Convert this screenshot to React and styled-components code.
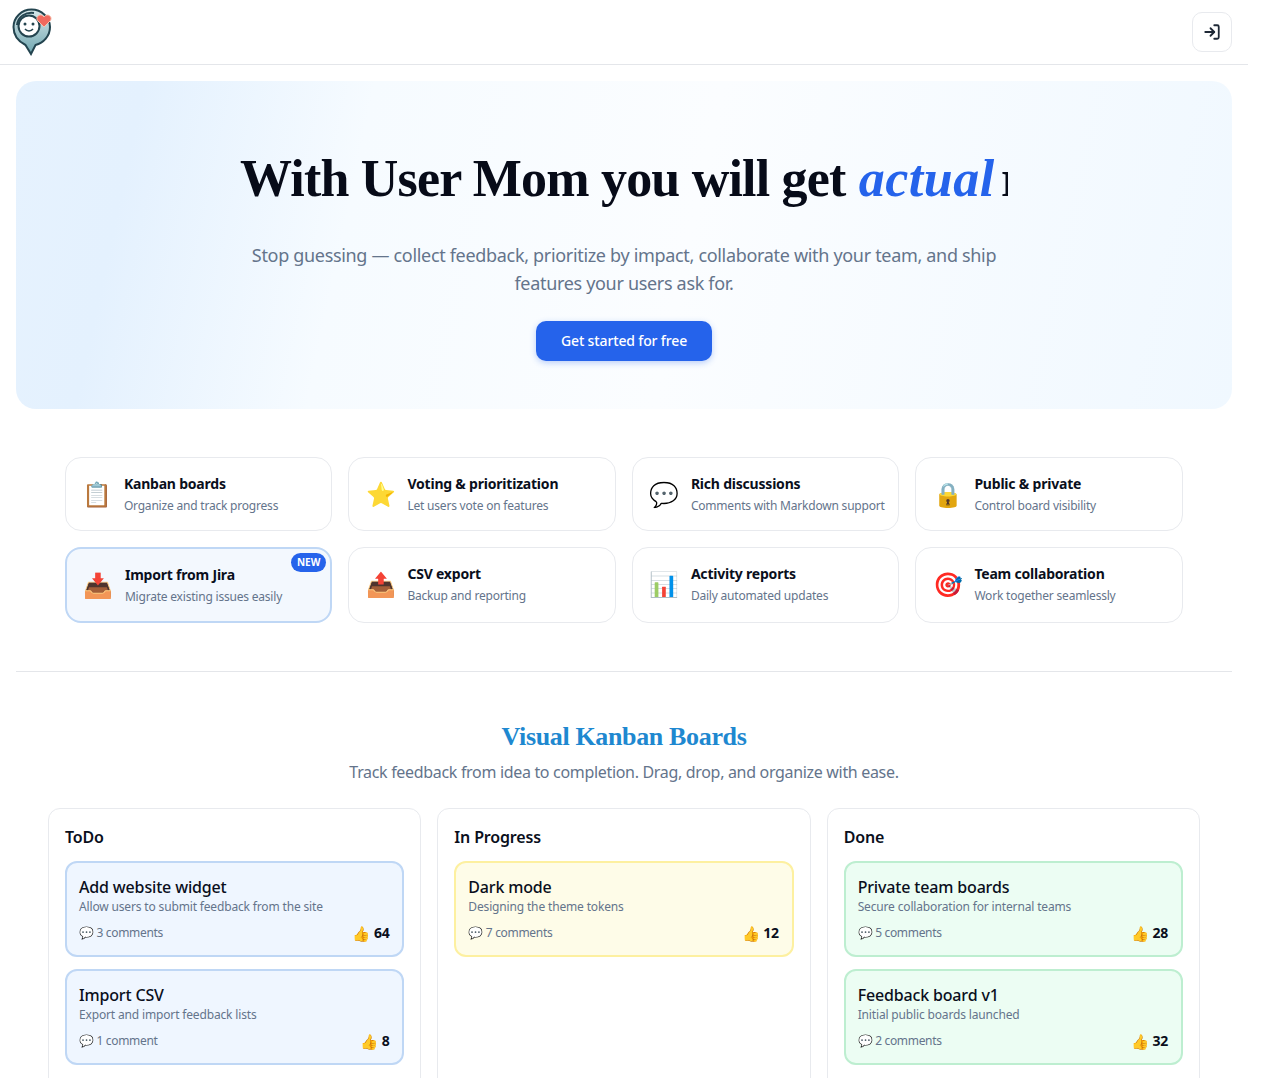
import React from "react";
import styled, { createGlobalStyle } from "styled-components";
import { LogIn } from "lucide-react";

const Global = createGlobalStyle`
    html, body {
        margin: 0;
        height: 1078px;
        overflow: hidden;
        background: #ffffff;
    }
    body {
        font-family: "Noto Sans", "Open Sans", sans-serif;
        letter-spacing: -0.02em;
        color: #0a0f1c;
    }
    * {
        box-sizing: border-box;
    }
`;

const Page = styled.div`
    width: 1248px;
`;

const Header = styled.header`
    height: 65px;
    border-bottom: 1px solid #e4e6ea;
    display: flex;
    align-items: center;
    justify-content: space-between;
    padding: 0 16px 0 12px;
`;

const IconButton = styled.button`
    width: 40px;
    height: 40px;
    border: 1px solid #e8eaee;
    border-radius: 10px;
    background: #ffffff;
    color: #1f2937;
    display: flex;
    align-items: center;
    justify-content: center;
    padding: 0;
`;

const Hero = styled.section`
    margin: 16px 16px 0;
    height: 328px;
    border-radius: 20px;
    background: linear-gradient(102deg, #e6f2fe 0%, #e4f1fe 10%, #f6fbff 28%, #fbfdff 55%, #f0f8ff 100%);
    display: flex;
    flex-direction: column;
    align-items: center;
    padding-top: 67px;
`;

const HeroTitle = styled.h1`
    margin: 0;
    width: 768px;
    height: 62px;
    overflow: hidden;
    white-space: nowrap;
    font-family: "Liberation Serif", "DejaVu Serif", serif;
    font-size: 52px;
    line-height: 62px;
    font-weight: 700;
    letter-spacing: -0.8px;
    color: #070b18;
`;

const Accent = styled.em`
    color: #2563eb;
    letter-spacing: 0.5px;
    margin-left: 1px;
`;

const Typed = styled.span`
    margin-left: -6px;
`;

const HeroText = styled.p`
    margin: 31px 0 0;
    width: 768px;
    text-align: center;
    font-size: 18px;
    line-height: 28px;
    color: #64748b;
`;

const Cta = styled.button`
    margin-top: 24px;
    width: 176px;
    height: 40px;
    border: none;
    border-radius: 10px;
    background: #2563eb;
    color: #ffffff;
    padding: 0 0 2px;
    font: 500 14px "Noto Sans", sans-serif;
    letter-spacing: -0.01em;
    box-shadow: 0 2px 6px rgba(37, 99, 235, 0.3);
`;

const Features = styled.section`
    margin: 48px 0 0 64.9px;
    width: 1118px;
    display: grid;
    grid-template-columns: repeat(4, minmax(0, 1fr));
    gap: 16px;
`;

const Feature = styled.div`
    position: relative;
    border: ${(p) => (p.$highlight ? "2px solid #bfd7f5" : "1px solid #e8eaee")};
    border-radius: 16px;
    background: ${(p) => (p.$highlight ? "#f3f8fe" : "#ffffff")};
    display: flex;
    gap: 12px;
    padding: 16px;
`;

const FeatureEmoji = styled.span`
    width: 30px;
    height: 40px;
    font-size: 24px;
    line-height: 40px;
    text-align: center;
    flex: none;
`;

const FeatureTitle = styled.div`
    font-size: 14px;
    line-height: 20px;
    font-weight: 700;
    letter-spacing: -0.015em;
    white-space: nowrap;
`;

const FeatureText = styled.div`
    font-size: 12px;
    line-height: 16px;
    margin-top: 4px;
    color: #64748b;
    letter-spacing: -0.017em;
    white-space: nowrap;
`;

const NewBadge = styled.span`
    position: absolute;
    top: 4px;
    right: 4px;
    height: 19px;
    padding: 0 6px;
    border-radius: 10px;
    background: #2563eb;
    color: #ffffff;
    font-size: 10px;
    font-weight: 700;
    line-height: 19px;
    letter-spacing: 0;
`;

const Divider = styled.hr`
    margin: 48px 16px 0;
    border: none;
    border-top: 1px solid #e4e6ea;
`;

const SectionTitle = styled.h2`
    margin: 47px 0 0;
    text-align: center;
    font-family: "Liberation Serif", "DejaVu Serif", serif;
    font-size: 26px;
    line-height: 36px;
    font-weight: 700;
    letter-spacing: -0.35px;
    color: #1e88d0;
`;

const SectionText = styled.p`
    margin: 5px 0 0;
    text-align: center;
    font-size: 16px;
    line-height: 24px;
    color: #64748b;
`;

const Board = styled.section`
    margin: 24px 48px 0;
    display: grid;
    grid-template-columns: repeat(3, 1fr);
    gap: 16px;
`;

const Column = styled.div`
    height: 320px;
    border: 1px solid #e8eaee;
    border-radius: 12px;
    padding: 16px;
`;

const ColumnTitle = styled.h3`
    margin: 0 0 12px;
    font-size: 16px;
    line-height: 24px;
    font-weight: 600;
    letter-spacing: -0.01em;
`;

const palette = {
    blue: ["#eff6ff", "#bfd7f5"],
    yellow: ["#fefce8", "#fdf0a0"],
    green: ["#ecfdf3", "#bdeed0"],
};

const Card = styled.div`
    height: 96px;
    margin-bottom: 12px;
    border: 2px solid ${(p) => palette[p.$tone][1]};
    border-radius: 12px;
    background: ${(p) => palette[p.$tone][0]};
    padding: 12px;
`;

const CardTitle = styled.div`
    margin-top: 1px;
    font-size: 16px;
    line-height: 23px;
    font-weight: 500;
    letter-spacing: -0.01em;
`;

const CardText = styled.div`
    font-size: 12px;
    line-height: 16px;
    color: #64748b;
    letter-spacing: -0.013em;
`;

const CardFooter = styled.div`
    margin-top: 8px;
    display: flex;
    align-items: center;
    justify-content: space-between;
    font-size: 12px;
    color: #64748b;
`;

const Votes = styled.span`
    display: flex;
    align-items: center;
    gap: 4px;
    height: 19px;
    margin-right: 1px;
    font-size: 14px;
    font-weight: 700;
    color: #0a0f1c;
`;

const ThumbEmoji = styled.span`
    font-size: 14.5px;
`;

const Logo = () => (
    <svg width="42" height="48" viewBox="0 0 42 48">
        <defs>
            <linearGradient id="pin" x1="0" y1="0" x2="0" y2="1">
                <stop offset="0" stopColor="#d8e8ea" />
                <stop offset="1" stopColor="#6fa6b0" />
            </linearGradient>
        </defs>
        <path
            d="M19.5 1.5C9.5 1.5 1.5 9.5 1.5 19c0 9 6 15 12 18l5.5 9 4.5-9c8-2 14.5-9 14.5-18C38 9.5 29.5 1.5 19.5 1.5z"
            fill="url(#pin)"
            stroke="#23444f"
            strokeWidth="2"
        />
        <path d="M5 17C6 8 14 4 22 5" fill="none" stroke="#23444f" strokeWidth="2" />
        <circle cx="17" cy="18" r="10.5" fill="#ffffff" stroke="#23444f" strokeWidth="2" />
        <circle cx="13" cy="16" r="1.5" fill="#23444f" />
        <circle cx="21" cy="16" r="1.5" fill="#23444f" />
        <path d="M13 21c2 2.5 6 2.5 8 0" fill="none" stroke="#23444f" strokeWidth="1.5" />
        <path d="M32 19l-6.5-6.5c-2.5-4 3.5-8 6.5-3.500 3-4.500 9-.5 6.500 3.500z" fill="#f0695e" stroke="#f7c3b0" strokeWidth="1" />
    </svg>
);

const features = [
    ["📋", "Kanban boards", "Organize and track progress"],
    ["⭐", "Voting & prioritization", "Let users vote on features"],
    ["💬", "Rich discussions", "Comments with Markdown support"],
    ["🔒", "Public & private", "Control board visibility"],
    ["📥", "Import from Jira", "Migrate existing issues easily", true],
    ["📤", "CSV export", "Backup and reporting"],
    ["📊", "Activity reports", "Daily automated updates"],
    ["🎯", "Team collaboration", "Work together seamlessly"],
];

const columns = [
    {
        title: "ToDo",
        tone: "blue",
        cards: [
            ["Add website widget", "Allow users to submit feedback from the site", "3 comments", 64],
            ["Import CSV", "Export and import feedback lists", "1 comment", 8],
        ],
    },
    {
        title: "In Progress",
        tone: "yellow",
        cards: [["Dark mode", "Designing the theme tokens", "7 comments", 12]],
    },
    {
        title: "Done",
        tone: "green",
        cards: [
            ["Private team boards", "Secure collaboration for internal teams", "5 comments", 28],
            ["Feedback board v1", "Initial public boards launched", "2 comments", 32],
        ],
    },
];

export default function App() {
    return (
        <Page>
            <Global />
            <Header>
                <Logo />
                <IconButton>
                    <LogIn size={18} strokeWidth={2.4} />
                </IconButton>
            </Header>
            <Hero>
                <HeroTitle>
                    With User Mom you will get <Accent>actual</Accent> <Typed>results</Typed>
                </HeroTitle>
                <HeroText>
                    Stop guessing — collect feedback, prioritize by impact, collaborate with your team, and ship features your users ask for.
                </HeroText>
                <Cta>Get started for free</Cta>
            </Hero>
            <Features>
                {features.map(([emoji, title, text, isNew]) => (
                    <Feature key={title} $highlight={isNew}>
                        <FeatureEmoji>{emoji}</FeatureEmoji>
                        <div>
                            <FeatureTitle>{title}</FeatureTitle>
                            <FeatureText>{text}</FeatureText>
                        </div>
                        {isNew && <NewBadge>NEW</NewBadge>}
                    </Feature>
                ))}
            </Features>
            <Divider />
            <SectionTitle>Visual Kanban Boards</SectionTitle>
            <SectionText>Track feedback from idea to completion. Drag, drop, and organize with ease.</SectionText>
            <Board>
                {columns.map((col) => (
                    <Column key={col.title}>
                        <ColumnTitle>{col.title}</ColumnTitle>
                        {col.cards.map(([title, text, comments, votes]) => (
                            <Card key={title} $tone={col.tone}>
                                <CardTitle>{title}</CardTitle>
                                <CardText>{text}</CardText>
                                <CardFooter>
                                    <span>💬 {comments}</span>
                                    <Votes>
                                        <ThumbEmoji>👍</ThumbEmoji>
                                        {votes}
                                    </Votes>
                                </CardFooter>
                            </Card>
                        ))}
                    </Column>
                ))}
            </Board>
        </Page>
    );
}
